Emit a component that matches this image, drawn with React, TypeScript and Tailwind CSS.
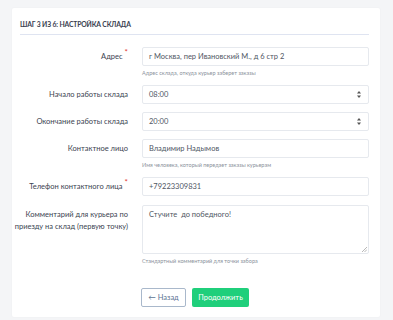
import React from 'react';

const font = { fontFamily: 'Lato, "Open Sans", Arial, sans-serif' };

const Label = ({ text, required }: { text: string; required?: boolean }) => (
  <div className="text-right text-[7.5px] leading-[11.5px] text-[#3b4350]">
    {text}
    {required && <sup className="ml-[2px] text-[8px] text-[#e3342f]">*</sup>}
  </div>
);

const Help = ({ text }: { text: string }) => (
  <div className="mt-[3px] text-[5.5px] leading-[8px] text-[#8b929c]">{text}</div>
);

const TextBox = ({ value }: { value: string }) => (
  <div className="flex h-[19px] items-center rounded-[2px] border border-[#e6e9ee] bg-white px-[6px] text-[7.5px] text-[#4f5663]">
    {value}
  </div>
);

const SelectBox = ({ value }: { value: string }) => (
  <div className="flex h-[19px] items-center justify-between rounded-[2px] border border-[#e6e9ee] bg-white pl-[6px] pr-[7px] text-[7.5px] text-[#4f5663]">
    <span>{value}</span>
    <svg width="4" height="7" viewBox="0 0 4 7">
      <path d="M2 0 L4 2.6 H0 Z" fill="#555" />
      <path d="M2 7 L4 4.4 H0 Z" fill="#555" />
    </svg>
  </div>
);

const Row = ({
  label,
  required,
  center = true,
  children,
}: {
  label: string;
  required?: boolean;
  center?: boolean;
  children: React.ReactNode;
}) => (
  <div className="grid grid-cols-[114px_1fr] gap-x-[14px]">
    <div className={center ? 'flex h-[19px] items-center justify-end' : 'pt-[4px]'}>
      <Label text={label} required={required} />
    </div>
    <div>{children}</div>
  </div>
);

export default function App() {
  return (
    <div className="min-h-[320px] bg-[#f4f5f7] px-[12px] pt-[8px]" style={font}>
      <div className="w-[368px] rounded-[2px] bg-white pb-[10px] pl-[2px] pr-[11px] shadow-[0_0_2px_rgba(0,0,0,0.04)]">
        <div className="ml-[6px] pt-[11px] pb-[5px] text-[6.8px] font-bold uppercase tracking-[-0.15px] text-[#3a4150]">
          Шаг 3 из 6: Настройка склада
        </div>
        <div className="ml-[6px] h-px bg-[#dfe4f1]" />

        <div className="mt-[12px] flex flex-col">
          <Row label="Адрес" required>
            <TextBox value="г Москва, пер Ивановский М., д 6 стр 2" />
            <Help text="Адрес склада, откуда курьер заберет заказы" />
          </Row>
          <div className="mt-[8px]">
            <Row label="Начало работы склада">
              <SelectBox value="08:00" />
            </Row>
          </div>
          <div className="mt-[8px]">
            <Row label="Окончание работы склада">
              <SelectBox value="20:00" />
            </Row>
          </div>
          <div className="mt-[8px]">
            <Row label="Контактное лицо">
              <TextBox value="Владимир Надымов" />
              <Help text="Имя человека, который передает заказы курьерам" />
            </Row>
          </div>
          <div className="mt-[8px]">
            <Row label="Телефон контактного лица" required>
              <TextBox value="+79223309831" />
            </Row>
          </div>
          <div className="mt-[9px]">
            <Row label="Комментарий для курьера по приезду на склад (первую точку)" center={false}>
              <div className="relative h-[49px] rounded-[2px] border border-[#e6e9ee] bg-white px-[6px] pt-[3px] text-[7.5px] text-[#4f5663]">
                Стучите&nbsp; до победного!
                <svg className="absolute bottom-[1px] right-[1px]" width="5" height="5" viewBox="0 0 5 5">
                  <path d="M5 0 L0 5 M5 2.5 L2.5 5" stroke="#999" strokeWidth="0.7" />
                </svg>
              </div>
              <Help text="Стандартный комментарий для точки забора" />
            </Row>
          </div>
          <div className="mt-[23px] grid grid-cols-[114px_1fr] gap-x-[13px]">
            <div />
            <div className="flex gap-[6px]">
              <button className="flex h-[19px] w-[45px] items-center justify-center rounded-[2px] border border-[#a9b8cb] bg-white text-[7.5px] text-[#5d7594]">
                ← Назад
              </button>
              <button className="flex h-[19px] w-[57px] items-center justify-center rounded-[2px] bg-[#1fcf7b] text-[7.5px] text-white">
                Продолжить
              </button>
            </div>
          </div>
        </div>
      </div>
    </div>
  );
}
